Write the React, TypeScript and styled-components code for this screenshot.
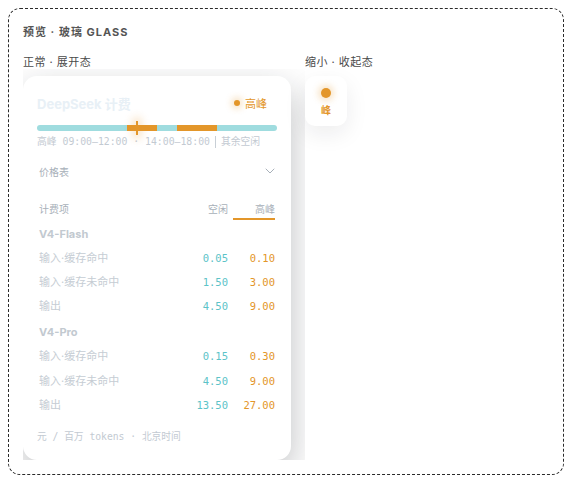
import React from 'react'
import styled, { createGlobalStyle } from 'styled-components'

const SANS = `Inter, "Noto Sans CJK SC", "Noto Sans", sans-serif`
const MONO = `"DejaVu Sans Mono", "Noto Sans CJK SC", monospace`

const IDLE = '#5cc3c8'
const PEAK = '#e3962a'

const GlobalStyle = createGlobalStyle`
  html, body {
    margin: 0;
    background: #fff;
  }
  body {
    padding: 8px;
    font-family: ${SANS};
  }
`

const Frame = styled.div`
  box-sizing: border-box;
  height: 467px;
  border: 1px dashed #2b2b2b;
  border-radius: 12px;
  padding: 16px 14px 0;
`

const Title = styled.div`
  font-size: 11px;
  font-weight: 700;
  letter-spacing: 1px;
  color: #555;
  line-height: 14px;
`

const Columns = styled.div`
  display: grid;
  grid-template-columns: 282px 1fr;
  margin-top: 16px;
`

const Column = styled.div`
  display: flex;
  flex-direction: column;
`

const Label = styled.div`
  font-size: 11px;
  color: #4a4a4a;
  letter-spacing: 0.5px;
  line-height: 14px;
`

const Stage = styled.div<{ $clip?: boolean }>`
  padding-top: 7px;
  overflow: ${({ $clip }) => ($clip ? 'hidden' : 'visible')};
  display: flex;
  align-items: flex-start;
`

const Card = styled.div`
  box-sizing: border-box;
  width: 268px;
  height: 384px;
  background: #fff;
  border-radius: 14px;
  box-shadow: 0 14px 36px rgba(20, 24, 32, 0.28);
  padding: 18px 14px 0;
  display: flex;
  flex-direction: column;
`

const CardHead = styled.div`
  display: flex;
  align-items: center;
  justify-content: space-between;
  height: 18px;
`

const CardName = styled.div`
  font-size: 13px;
  font-weight: 700;
  color: #e8f0f6;
`

const Badge = styled.div`
  display: flex;
  align-items: center;
  gap: 5px;
  padding-right: 10px;
  font-size: 11px;
  color: ${PEAK};
`

const Dot = styled.span<{ $size: number }>`
  width: ${({ $size }) => $size}px;
  height: ${({ $size }) => $size}px;
  border-radius: 50%;
  background: ${PEAK};
  box-shadow: 0 0 6px 3px rgba(227, 150, 42, 0.25);
`

const Track = styled.div`
  position: relative;
  margin-top: 13px;
  height: 6px;
  border-radius: 3px;
  background: #9fdcdf;
`

const Segment = styled.div`
  position: absolute;
  top: 0;
  bottom: 0;
  background: ${PEAK};
`

const Marker = styled.div`
  position: absolute;
  top: -4px;
  width: 2px;
  height: 14px;
  margin-left: -1px;
  background: ${PEAK};
  box-shadow: 0 0 8px 3px rgba(227, 150, 42, 0.3);
`

const Caption = styled.div`
  display: flex;
  align-items: center;
  margin-top: 4px;
  font-family: ${MONO};
  font-size: 9.8px;
  line-height: 14px;
  color: #c3cad2;
  white-space: pre;
`

const Divider = styled.span`
  width: 1px;
  height: 12px;
  margin: 0 5px;
  background: #c8cfd6;
`

const Toggle = styled.div`
  display: flex;
  align-items: center;
  justify-content: space-between;
  margin-top: 13px;
  padding: 0 2px;
  height: 18px;
  font-size: 10px;
  color: #a8b0b9;
`

const Table = styled.div`
  margin-top: 20px;
  padding: 0 2px;
  display: grid;
  grid-template-columns: 1fr 42px 42px;
  column-gap: 5px;
  align-items: center;
`

const HeadCell = styled.div<{ $right?: boolean; $active?: boolean }>`
  height: 20px;
  line-height: 18px;
  font-size: 10px;
  color: #a8b0b9;
  text-align: ${({ $right }) => ($right ? 'right' : 'left')};
  border-bottom: 2px solid ${({ $active }) => ($active ? PEAK : 'transparent')};
  box-sizing: border-box;
`

const Group = styled.div`
  grid-column: 1 / -1;
  height: 24px;
  line-height: 24px;
  margin-top: 1.5px;
  font-size: 11px;
  font-weight: 700;
  color: #c2c9d0;
`

const RowLabel = styled.div`
  height: 24.4px;
  line-height: 24.4px;
  font-size: 11px;
  color: #c6cdd4;
  white-space: nowrap;
`

const Price = styled.div<{ $tone: string }>`
  text-align: right;
  font-family: ${MONO};
  font-size: 10.5px;
  color: ${({ $tone }) => $tone};
`

const Footer = styled.div`
  margin-top: 13px;
  font-family: ${MONO};
  font-size: 9.7px;
  line-height: 14px;
  color: #c3cad2;
  white-space: pre;
`

const MiniCard = styled.div`
  box-sizing: border-box;
  width: 42px;
  height: 50px;
  background: #fff;
  border-radius: 10px;
  box-shadow: 0 8px 22px rgba(20, 24, 32, 0.08);
  display: flex;
  flex-direction: column;
  align-items: center;
  padding-top: 12px;
  gap: 6px;
`

const MiniText = styled.div`
  font-size: 10px;
  font-weight: 700;
  color: ${PEAK};
  line-height: 12px;
`

const Chevron = () => (
  <svg width="10" height="6" viewBox="0 0 10 6" fill="none">
    <path d="M1 1l4 4 4-4" stroke="#a8b0b9" strokeWidth="1" strokeLinecap="round" strokeLinejoin="round" />
  </svg>
)

// hours as a share of the 24h track
const pct = (h: number) => `${(h / 24) * 100}%`

const peaks = [
  [9, 12],
  [14, 18],
]

const models = [
  {
    name: 'V4-Flash',
    rows: [
      ['输入·缓存命中', '0.05', '0.10'],
      ['输入·缓存未命中', '1.50', '3.00'],
      ['输出', '4.50', '9.00'],
    ],
  },
  {
    name: 'V4-Pro',
    rows: [
      ['输入·缓存命中', '0.15', '0.30'],
      ['输入·缓存未命中', '4.50', '9.00'],
      ['输出', '13.50', '27.00'],
    ],
  },
]

const App: React.FC = () => {
  const now = 10

  return (
    <>
      <GlobalStyle />
      <Frame>
        <Title>预览 · 玻璃 GLASS</Title>
        <Columns>
          <Column>
            <Label>正常 · 展开态</Label>
            <Stage $clip>
              <Card>
                <CardHead>
                  <CardName>DeepSeek 计费</CardName>
                  <Badge>
                    <Dot $size={6} />
                    高峰
                  </Badge>
                </CardHead>
                <Track>
                  {peaks.map(([a, b]) => (
                    <Segment key={a} style={{ left: pct(a), width: pct(b - a) }} />
                  ))}
                  <Marker style={{ left: pct(now) }} />
                </Track>
                <Caption>
                  高峰 09:00–12:00 · 14:00–18:00
                  <Divider />
                  其余空闲
                </Caption>
                <Toggle>
                  价格表
                  <Chevron />
                </Toggle>
                <Table>
                  <HeadCell>计费项</HeadCell>
                  <HeadCell $right>空闲</HeadCell>
                  <HeadCell $right $active>
                    高峰
                  </HeadCell>
                  {models.map((m) => (
                    <React.Fragment key={m.name}>
                      <Group>{m.name}</Group>
                      {m.rows.map(([label, idle, peak]) => (
                        <React.Fragment key={label}>
                          <RowLabel>{label}</RowLabel>
                          <Price $tone={IDLE}>{idle}</Price>
                          <Price $tone={PEAK}>{peak}</Price>
                        </React.Fragment>
                      ))}
                    </React.Fragment>
                  ))}
                </Table>
                <Footer>元 / 百万 tokens · 北京时间</Footer>
              </Card>
            </Stage>
          </Column>
          <Column>
            <Label>缩小 · 收起态</Label>
            <Stage>
              <MiniCard>
                <Dot $size={10} />
                <MiniText>峰</MiniText>
              </MiniCard>
            </Stage>
          </Column>
        </Columns>
      </Frame>
    </>
  )
}

export default App
